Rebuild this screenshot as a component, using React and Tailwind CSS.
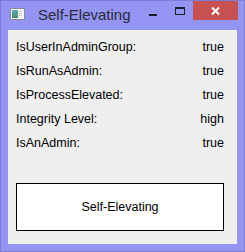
import React from "react";

const rows = [
  ["IsUserInAdminGroup:", "true"],
  ["IsRunAsAdmin:", "true"],
  ["IsProcessElevated:", "true"],
  ["Integrity Level:", "high"],
  ["IsAnAdmin:", "true"],
];

const AppIcon = () => (
  <svg width="15" height="12" viewBox="0 0 15 12" aria-hidden="true">
    <rect x="0.5" y="0.5" width="14" height="11" fill="#f4f4f4" stroke="#8a8a9a" />
    <defs>
      <linearGradient id="pane" x1="0" y1="0" x2="0" y2="1">
        <stop offset="0" stopColor="#5fa8b8" />
        <stop offset="1" stopColor="#3f8f6a" />
      </linearGradient>
    </defs>
    <rect x="2" y="2" width="6" height="8" fill="url(#pane)" />
    <rect x="9" y="3" width="3" height="1" fill="#c8c8c8" />
    <rect x="9" y="5" width="3" height="1" fill="#c8c8c8" />
    <rect x="9" y="7" width="3" height="1" fill="#c8c8c8" />
  </svg>
);

export default function App() {
  return (
    <div
      className="w-[245px] h-[252px] bg-[#9494f3] border border-[#7c7cd6] flex flex-col"
      style={{ fontFamily: '"Liberation Sans", Arial, sans-serif' }}
    >
      {/* title bar */}
      <div className="h-[29px] flex items-start">
        <div className="ml-[9px] mt-[7px]">
          <AppIcon />
        </div>
        <span className="ml-[13px] mt-[5px] text-[15px] leading-[18px] text-[#2a2a36]">
          Self-Elevating
        </span>
        <div className="ml-auto flex items-start">
          <div className="w-[26px] h-[19px] flex items-center justify-center">
            <div className="w-[8px] h-[2px] bg-[#1e1e28] mt-[9px]" />
          </div>
          <div className="w-[27px] h-[19px] flex items-start justify-center pt-[6px]">
            <div className="w-[10px] h-[8px] border border-t-2 border-[#1e1e28]" />
          </div>
          <div className="w-[45px] h-[19px] bg-[#c75050] flex items-center justify-center">
            <svg width="9" height="8" viewBox="0 0 9 8" aria-hidden="true">
              <path d="M1 0.5 L8 7.5 M8 0.5 L1 7.5" stroke="#fff" strokeWidth="2" />
            </svg>
          </div>
          <div className="w-[6px]" />
        </div>
      </div>

      {/* client area */}
      <div className="mx-[7px] h-[214px] bg-[#efefef] flex flex-col text-[12.5px] text-black">
        <div className="pt-[5px] flex flex-col">
          {rows.map(([label, value]) => (
            <div key={label} className="h-[24px] flex items-center justify-between pl-[8px] pr-[13px]">
              <span>{label}</span>
              <span>{value}</span>
            </div>
          ))}
        </div>
        <button className="mt-[28px] ml-[8px] w-[208px] h-[48px] bg-white border border-black flex items-center justify-center text-[12.5px]">
          Self-Elevating
        </button>
      </div>
    </div>
  );
}
